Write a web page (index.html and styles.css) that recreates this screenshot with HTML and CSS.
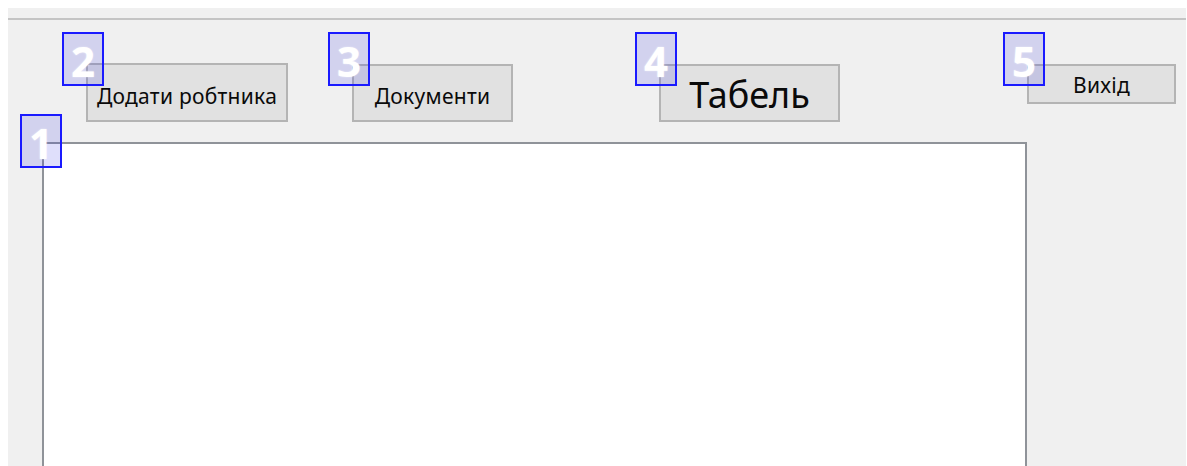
FILE: index.html
```html
<!DOCTYPE html>
<html lang="uk">
<head>
<meta charset="utf-8">
<title>Робітники</title>
<link rel="stylesheet" href="styles.css">
</head>
<body>
  <div class="window">
    <div class="window-rule"></div>
    <div class="toolbar">
      <button class="btn btn-add">Додати робтника<span class="tag">2</span></button>
      <button class="btn btn-docs">Документи<span class="tag">3</span></button>
      <button class="btn btn-table">Табель<span class="tag">4</span></button>
      <button class="btn btn-exit">Вихід<span class="tag">5</span></button>
    </div>
    <div class="list-box"><span class="tag tag-list">1</span></div>
  </div>
</body>
</html>
```

FILE: styles.css
```css
html, body {
  margin: 0;
  padding: 0;
  background: #ffffff;
  height: 100%;
  overflow: hidden;
}

body {
  font-family: "Noto Sans", "Open Sans", sans-serif;
}

.window {
  margin: 8px 1px 0 8px;
  height: calc(100% - 8px);
  background: #f0f0f0;
  padding-top: 10px;
  box-sizing: border-box;
  overflow: hidden;
}

.window-rule {
  height: 2px;
  background: #c4c4c4;
}

.toolbar {
  display: flex;
  align-items: flex-start;
  margin-top: 43px;
}

.btn {
  position: relative;
  box-sizing: border-box;
  height: 59px;
  background: #e1e1e1;
  border: 2px solid #b4b4b4;
  color: #0a0a0a;
  font-family: "Noto Sans", "Open Sans", sans-serif;
  font-size: 21px;
  letter-spacing: 0.3px;
  line-height: 1;
  padding: 0;
  display: flex;
  align-items: center;
  justify-content: center;
}

.btn-add {
  margin-left: 78px;
  width: 202px;
  padding-top: 7px;
}

.btn-docs {
  margin-left: 64px;
  width: 161px;
  margin-top: 1px;
  height: 58px;
  padding-top: 7px;
}

.btn-table {
  margin-left: 146px;
  width: 181px;
  margin-top: 1px;
  height: 58px;
  font-size: 36px;
  letter-spacing: 0;
  padding-top: 4px;
}

.btn-exit {
  margin-left: 187px;
  width: 149px;
  margin-top: 1px;
  height: 40px;
  padding-top: 3px;
}

.tag {
  position: absolute;
  left: -26px;
  top: -33px;
  width: 42px;
  height: 54px;
  box-sizing: border-box;
  border: 2px solid #1a1aff;
  background: rgba(40, 40, 230, 0.15);
  color: #ffffff;
  font-family: "Open Sans", "Noto Sans", sans-serif;
  font-weight: 700;
  font-size: 42px;
  letter-spacing: 0;
  line-height: 1;
  display: flex;
  align-items: center;
  justify-content: center;
  padding-top: 4px;
  text-shadow: 0 0 2px rgba(255, 255, 255, 0.6);
}

.btn-docs .tag,
.btn-table .tag,
.btn-exit .tag {
  top: -34px;
}

.list-box {
  position: relative;
  margin: 20px 0 0 34px;
  width: 985px;
  height: 330px;
  box-sizing: border-box;
  background: #ffffff;
  border: 2px solid #8f9399;
  border-bottom: none;
}

.tag-list {
  left: -24px;
  top: -30px;
}
```
